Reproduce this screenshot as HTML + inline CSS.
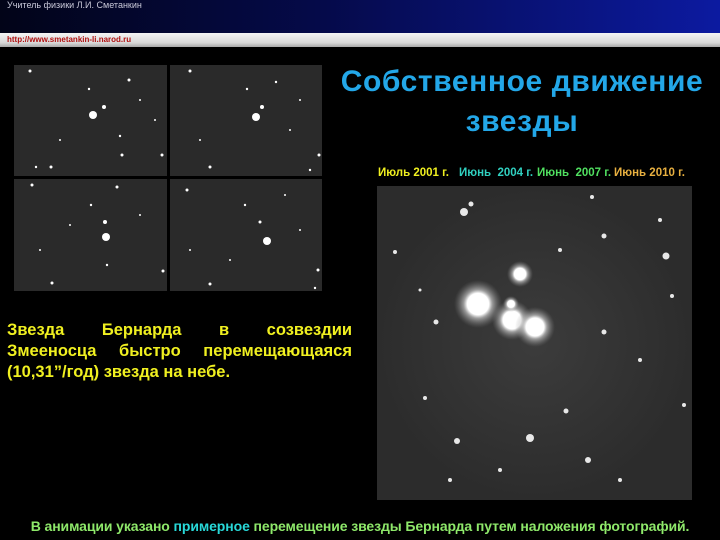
<!DOCTYPE html>
<html><head><meta charset="utf-8"><style>
body{margin:0;width:720px;height:540px;background:#000;overflow:hidden;position:relative;font-family:"Liberation Sans",sans-serif}
.hdr{position:absolute;left:0;top:0;width:720px;height:33px;background:linear-gradient(90deg,#020418 0%,#050a4a 45%,#0c1aa0 100%)}
.hdr span{position:absolute;left:7px;top:0;font-size:9px;color:#c8c8d8}
.bar{position:absolute;left:0;top:33px;width:720px;height:14px;background:linear-gradient(180deg,#f4f4f4,#d8d8d8 70%,#a8a8a8)}
.bar span{position:absolute;left:7px;top:2px;font-size:8px;font-weight:bold;color:#b01010}
.title{position:absolute;left:322px;top:62px;width:400px;text-align:center;color:#23a7e8;font-weight:bold;font-size:30px;letter-spacing:0.6px;line-height:40px}
.yel{position:absolute;left:7px;top:320px;width:345px;color:#f0f020;font-weight:bold;font-size:16.5px;line-height:21px}
.cap{position:absolute;top:167px;font-size:11.5px;font-weight:bold;white-space:nowrap}
.foot{position:absolute;left:0;width:720px;top:518px;text-align:center;font-size:14px;font-weight:bold;color:#8ee86a;letter-spacing:-0.1px;white-space:nowrap}
</style></head><body>
<div class="hdr"><span>Учитель физики Л.И. Сметанкин</span></div>
<div class="bar"><span>http://www.smetankin-li.narod.ru</span></div>
<svg style="position:absolute;left:0;top:0" width="720" height="540">
<defs>
<radialGradient id="g"><stop offset="0" stop-color="#fff"/><stop offset="0.45" stop-color="#fff"/><stop offset="0.6" stop-color="#ddd" stop-opacity="0.6"/><stop offset="1" stop-color="#888" stop-opacity="0"/></radialGradient>
<radialGradient id="b"><stop offset="0" stop-color="#3c3c3c"/><stop offset="1" stop-color="#2c2c2c"/></radialGradient>
</defs>
<rect x="14" y="65" width="153" height="111" fill="#2a2a2a"/>
<rect x="170" y="65" width="152" height="111" fill="#2a2a2a"/>
<rect x="14" y="179" width="153" height="112" fill="#2a2a2a"/>
<rect x="170" y="179" width="152" height="112" fill="#2a2a2a"/>
<g fill="#fff">
<circle cx="93" cy="115" r="4"/><circle cx="104" cy="107" r="2"/><circle cx="30" cy="71" r="1.5"/><circle cx="129" cy="80" r="1.5"/><circle cx="89" cy="89" r="1.2"/><circle cx="51" cy="167" r="1.5"/><circle cx="122" cy="155" r="1.5"/><circle cx="162" cy="155" r="1.5"/><circle cx="36" cy="167" r="1.2"/><circle cx="120" cy="136" r="1.2"/><circle cx="155" cy="120" r="1"/><circle cx="60" cy="140" r="1"/><circle cx="140" cy="100" r="1"/>
<circle cx="256" cy="117" r="4"/><circle cx="262" cy="107" r="2"/><circle cx="190" cy="71" r="1.5"/><circle cx="276" cy="82" r="1.2"/><circle cx="247" cy="89" r="1.2"/><circle cx="210" cy="167" r="1.5"/><circle cx="319" cy="155" r="1.5"/><circle cx="310" cy="170" r="1.2"/><circle cx="200" cy="140" r="1"/><circle cx="290" cy="130" r="1"/><circle cx="300" cy="100" r="1"/>
<circle cx="106" cy="237" r="4"/><circle cx="105" cy="222" r="2"/><circle cx="32" cy="185" r="1.5"/><circle cx="117" cy="187" r="1.5"/><circle cx="91" cy="205" r="1.2"/><circle cx="52" cy="283" r="1.5"/><circle cx="163" cy="271" r="1.5"/><circle cx="107" cy="265" r="1.2"/><circle cx="40" cy="250" r="1"/><circle cx="140" cy="215" r="1"/><circle cx="70" cy="225" r="1"/>
<circle cx="267" cy="241" r="4"/><circle cx="260" cy="222" r="1.5"/><circle cx="187" cy="190" r="1.5"/><circle cx="245" cy="205" r="1.2"/><circle cx="210" cy="284" r="1.5"/><circle cx="318" cy="270" r="1.5"/><circle cx="315" cy="288" r="1.2"/><circle cx="285" cy="195" r="1"/><circle cx="230" cy="260" r="1"/><circle cx="300" cy="230" r="1"/><circle cx="190" cy="250" r="1"/>
</g>
<rect x="377" y="186" width="315" height="314" fill="url(#b)"/>
<g fill="#e8e8e8">
<circle cx="464" cy="212" r="4"/><circle cx="471" cy="204" r="2.5"/><circle cx="666" cy="256" r="3.5"/><circle cx="530" cy="438" r="4"/><circle cx="457" cy="441" r="3"/><circle cx="588" cy="460" r="3"/><circle cx="566" cy="411" r="2.5"/><circle cx="604" cy="236" r="2.5"/><circle cx="436" cy="322" r="2.5"/><circle cx="604" cy="332" r="2.5"/><circle cx="592" cy="197" r="2"/><circle cx="672" cy="296" r="2"/><circle cx="684" cy="405" r="2"/><circle cx="425" cy="398" r="2"/><circle cx="640" cy="360" r="2"/><circle cx="500" cy="470" r="2"/><circle cx="395" cy="252" r="2"/><circle cx="620" cy="480" r="2"/><circle cx="560" cy="250" r="2"/><circle cx="450" cy="480" r="2"/><circle cx="660" cy="220" r="2"/><circle cx="420" cy="290" r="1.5"/>
</g>
<circle cx="478" cy="304" r="24" fill="url(#g)"/>
<circle cx="512" cy="320" r="20" fill="url(#g)"/>
<circle cx="535" cy="327" r="20" fill="url(#g)"/>
<circle cx="520" cy="274" r="13" fill="url(#g)"/>
<circle cx="511" cy="304" r="8" fill="url(#g)"/>
</svg>
<div class="title">Собственное движение<br>звезды</div>
<div class="cap" style="left:378px;color:#f0f020">Июль 2001 г.</div>
<div class="cap" style="left:459px;color:#30d0c0">Июнь &nbsp;2004 г.</div>
<div class="cap" style="left:537px;color:#50e060">Июнь &nbsp;2007 г.</div>
<div class="cap" style="left:614px;color:#e8b040">Июнь 2010 г.</div>
<div class="yel"><div style="text-align:justify;text-align-last:justify">Звезда Бернарда в созвездии</div><div style="text-align:justify;text-align-last:justify">Змееносца быстро перемещающаяся</div><div>(10,31”/год) звезда на небе.</div></div>
<div class="foot">В анимации указано <span style="color:#28d8d8">примерное</span> перемещение звезды Бернарда путем наложения фотографий.</div>
</body></html>
